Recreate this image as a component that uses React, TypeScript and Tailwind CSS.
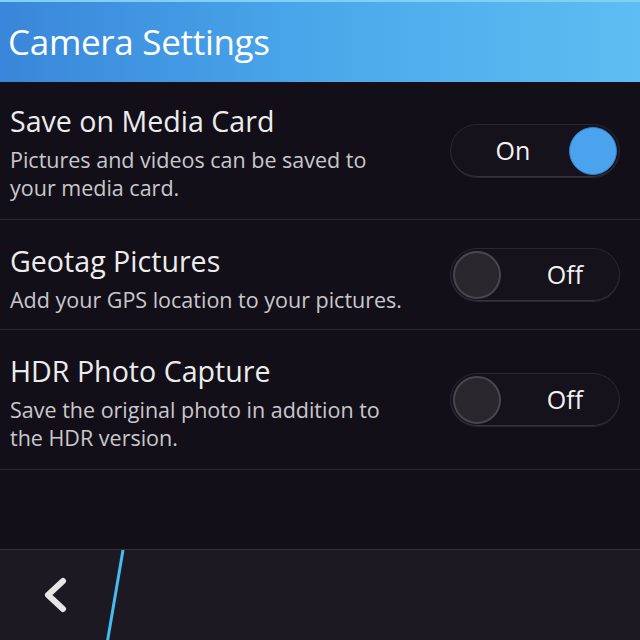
import React from 'react';

type Row = {
  title: string;
  desc: string[];
  on: boolean;
  height: string;
  pad: string;
};

const rows: Row[] = [
  {
    title: 'Save on Media Card',
    desc: ['Pictures and videos can be saved to', 'your media card.'],
    on: true,
    height: 'h-[138px]',
    pad: 'pt-[21px]',
  },
  {
    title: 'Geotag Pictures',
    desc: ['Add your GPS location to your pictures.'],
    on: false,
    height: 'h-[110px]',
    pad: 'pt-[23px]',
  },
  {
    title: 'HDR Photo Capture',
    desc: ['Save the original photo in addition to', 'the HDR version.'],
    on: false,
    height: 'h-[140px]',
    pad: 'pt-[23px]',
  },
];

const Toggle: React.FC<{ on: boolean }> = ({ on }) => (
  <div className="w-[170px] h-[54px] rounded-[27px] border border-[#2a2731] bg-[#15121b] flex items-center px-[2px] shadow-[inset_0_-1px_0_#36333d]">
    {on ? (
      <>
        <span className="flex-1 text-center text-[25px] text-[#f2f2f2] pl-[4px]">On</span>
        <div className="w-[48px] h-[48px] rounded-full bg-[#4aa3ec] border border-[#2f7fd0]" />
      </>
    ) : (
      <>
        <div className="w-[48px] h-[48px] rounded-full bg-[#29262e] border-2 border-[#48454e]" />
        <span className="flex-1 text-center text-[25px] text-[#f2f2f2] pl-[12px]">Off</span>
      </>
    )}
  </div>
);

export default function App() {
  return (
    <div
      className="w-[640px] h-[640px] overflow-hidden bg-[#130f18] flex flex-col"
      style={{ fontFamily: '"Open Sans", "Noto Sans", sans-serif' }}
    >
      {/* Title bar */}
      <div className="h-[82px] shrink-0 bg-gradient-to-r from-[#3a86da] via-[#4aa8ea] to-[#5cbef2] border-t-2 border-[#7fd0f5] flex items-center pl-[8px]">
        <h1 className="text-[35px] text-white leading-none tracking-[-0.3px] pb-[2px]">Camera Settings</h1>
      </div>

      {/* Settings list */}
      {rows.map((row) => (
        <div
          key={row.title}
          className={`${row.height} shrink-0 flex items-center justify-between border-b border-[#2a2730] pl-[10px] pr-[20px]`}
        >
          <div className={`self-start ${row.pad}`}>
            <div className="text-[28.6px] leading-[36px] text-[#ececec]">{row.title}</div>
            <div className="mt-[7px] text-[21.5px] leading-[28px] text-[#c9c8cc]">
              {row.desc.map((line) => (
                <div key={line}>{line}</div>
              ))}
            </div>
          </div>
          <Toggle on={row.on} />
        </div>
      ))}

      <div className="flex-1" />

      {/* Action bar */}
      <div className="relative h-[91px] shrink-0 bg-[#1c1923] border-t border-[#34313c] flex items-center">
        <button className="w-[112px] h-full flex items-center justify-center">
          <svg width="30" height="40" viewBox="0 0 30 40">
            <polyline
              points="22,6 7,20 22,34"
              fill="none"
              stroke="#e6e6e6"
              strokeWidth="6"
              strokeLinecap="round"
              strokeLinejoin="round"
            />
          </svg>
        </button>
        <svg className="absolute left-0 top-0" width="140" height="91" viewBox="0 0 140 91">
          <line x1="123" y1="0" x2="107.5" y2="91" stroke="#45bdf2" strokeWidth="3" />
        </svg>
      </div>
    </div>
  );
}
